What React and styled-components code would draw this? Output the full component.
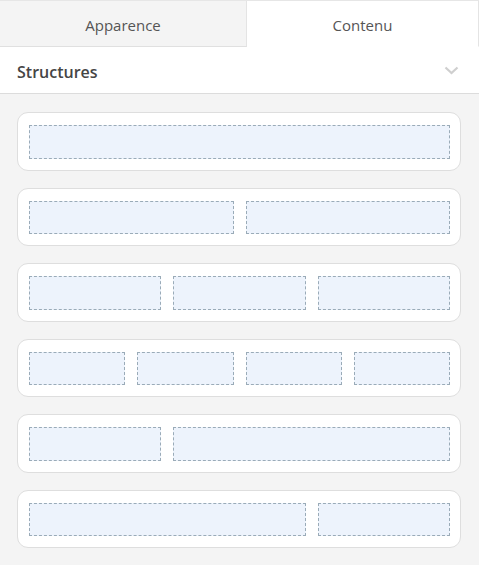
import React, { useState } from "react";
import styled, { createGlobalStyle } from "styled-components";

const layouts = [
  [12],
  [6, 6],
  [4, 4, 4],
  [3, 3, 3, 3],
  [4, 8],
  [8, 4],
];

const GlobalStyle = createGlobalStyle`
  html, body {
    margin: 0;
    padding: 0;
    background: #f4f4f4;
  }
  body {
    font-family: "Open Sans", "Noto Sans", sans-serif;
  }
`;

const Panel = styled.div`
  width: 479px;
  min-height: 565px;
  background: #f4f4f4;
  box-sizing: border-box;
`;

const Tabs = styled.div`
  display: flex;
  height: 47px;
  border-top: 1px solid #e6e6e6;
  box-sizing: border-box;
`;

const Tab = styled.button`
  flex: ${(p) => (p.$active ? "0 0 232px" : "0 0 247px")};
  border: none;
  border-right: 1px solid #e4e4e4;
  border-bottom: 1px solid ${(p) => (p.$active ? "transparent" : "#e0e0e0")};
  background: ${(p) => (p.$active ? "#fff" : "#f4f4f4")};
  color: #555;
  font-family: inherit;
  font-size: 15px;
  padding: 3px 0 0;
  cursor: pointer;
`;

const Header = styled.div`
  display: flex;
  align-items: center;
  justify-content: space-between;
  height: 47px;
  padding: 0 20px 0 17px;
  background: #fff;
  border-bottom: 1px solid #dcdcdc;
  box-sizing: border-box;
`;

const Title = styled.h3`
  margin: 3px 0 0;
  font-size: 16px;
  font-weight: 600;
  color: #454545;
`;

const List = styled.div`
  display: flex;
  flex-direction: column;
  gap: 17px;
  padding: 18px 18px 18px 17px;
  width: 479px;
  box-sizing: border-box;
`;

const Card = styled.div`
  display: grid;
  grid-template-columns: repeat(12, 1fr);
  column-gap: 12px;
  padding: 12px 10px 11px 11px;
  height: 58.5px;
  box-sizing: border-box;
  background: #fff;
  border: 1px solid #dedede;
  border-radius: 11px;
  cursor: pointer;
`;

const Cell = styled.div`
  grid-column: span ${(p) => p.$span};
  background: #edf3fc;
  border: 1px dashed #9aabb8;
  box-sizing: border-box;
`;

const Chevron = () => (
  <svg width="15" height="9" viewBox="0 0 15 9">
    <path d="M1.5 1.5 L7.5 7 L13.5 1.5" fill="none" stroke="#cfcfcf" strokeWidth="2.2" />
  </svg>
);

export default function App() {
  const [tab, setTab] = useState("contenu");
  return (
    <Panel>
      <GlobalStyle />
      <Tabs>
        <Tab $active={tab === "apparence"} onClick={() => setTab("apparence")}>
          Apparence
        </Tab>
        <Tab $active={tab === "contenu"} onClick={() => setTab("contenu")}>
          Contenu
        </Tab>
      </Tabs>
      <Header>
        <Title>Structures</Title>
        <Chevron />
      </Header>
      <List>
        {layouts.map((cols, i) => (
          <Card key={i}>
            {cols.map((span, j) => (
              <Cell key={j} $span={span} />
            ))}
          </Card>
        ))}
      </List>
    </Panel>
  );
}
